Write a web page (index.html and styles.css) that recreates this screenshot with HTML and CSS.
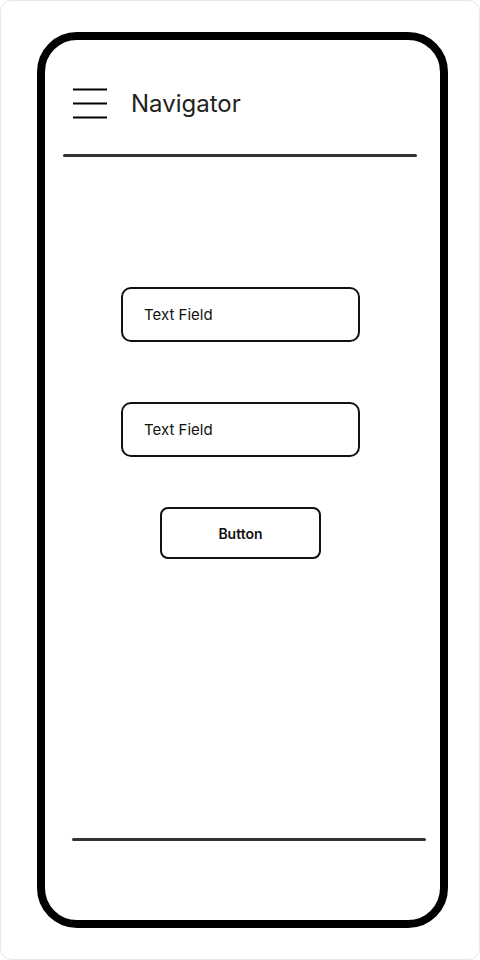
FILE: index.html
```html
<!DOCTYPE html>
<html>
<head>
<meta charset="utf-8">
<link rel="stylesheet" href="styles.css">
</head>
<body>
<div class="card">
  <div class="phone">
    <div class="header">
      <svg class="menu" width="34" height="31" viewBox="0 0 34 31">
        <line x1="0" y1="1.5" x2="34" y2="1.5" stroke="#000" stroke-width="2"/>
        <line x1="0" y1="15.5" x2="34" y2="15.5" stroke="#000" stroke-width="2"/>
        <line x1="0" y1="29.5" x2="34" y2="29.5" stroke="#000" stroke-width="2"/>
      </svg>
      <span class="title">Navigator</span>
    </div>
    <div class="divider top"></div>
    <div class="field first">Text Field</div>
    <div class="field second">Text Field</div>
    <div class="button">Button</div>
    <div class="divider bottom"></div>
  </div>
</div>
</body>
</html>
```
FILE: styles.css
```css
html, body {
  margin: 0;
  padding: 0;
  background: #fff;
}
.card {
  box-sizing: border-box;
  width: 480px;
  height: 960px;
  border: 1px solid #e6e6e6;
  border-radius: 12px;
  padding: 31px 0 0 36px;
  font-family: Inter, "Noto Sans", sans-serif;
}
.phone {
  box-sizing: border-box;
  width: 411px;
  height: 896px;
  border: 8px solid #000;
  border-radius: 40px;
  display: flex;
  flex-direction: column;
}
.header {
  display: flex;
  align-items: center;
  gap: 24px;
  padding: 48px 0 0 28px;
  height: 31px;
}
.menu {
  display: block;
}
.title {
  font-size: 24px;
  line-height: 31px;
  color: #222;
}
.divider {
  height: 3px;
  width: 354px;
  background: #333;
  border-radius: 2px;
}
.divider.top {
  margin: 35px 0 0 18px;
}
.divider.bottom {
  margin: auto 0 79px 27px;
}
.field {
  box-sizing: border-box;
  width: 239px;
  height: 55px;
  margin-left: 76px;
  border: 2px solid #111;
  border-radius: 10px;
  padding-left: 21px;
  display: flex;
  align-items: center;
  font-size: 15px;
  color: #111;
}
.field.first {
  margin-top: 130px;
}
.field.second {
  margin-top: 60px;
}
.button {
  box-sizing: border-box;
  width: 161px;
  height: 52px;
  margin: 50px 0 0 115px;
  border: 2px solid #111;
  border-radius: 8px;
  display: flex;
  align-items: center;
  justify-content: center;
  font-size: 14px;
  font-weight: 600;
  color: #111;
}
```
